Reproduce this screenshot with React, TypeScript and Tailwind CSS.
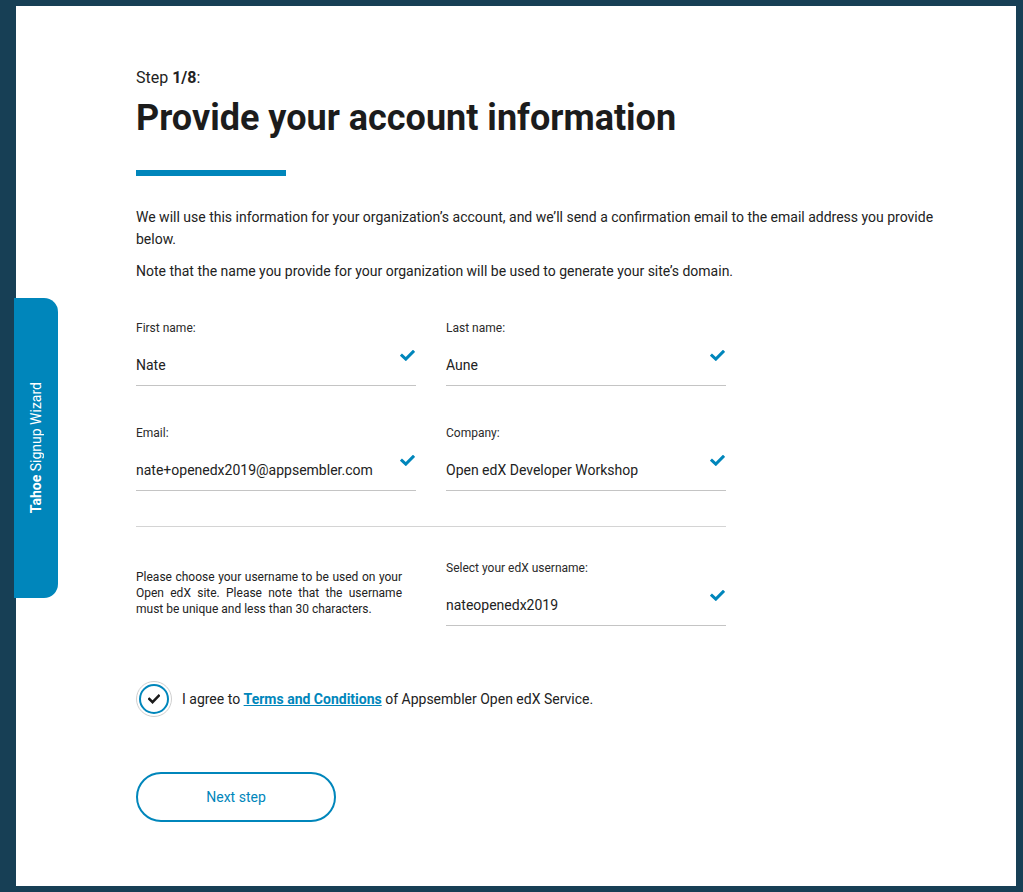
import React from 'react';

const Tick: React.FC<{ className?: string }> = ({ className }) => (
  <svg viewBox="0 0 14 11" className={className} fill="none">
    <path d="M1.5 5.5l3.8 3.6L12.5 1.8" stroke="currentColor" strokeWidth="3" strokeLinecap="square" />
  </svg>
);

const Field: React.FC<{ label: string; value: string }> = ({ label, value }) => (
  <div className="flex flex-col">
    <label className="text-[12px] leading-4 text-[#2a2a2a]">{label}</label>
    <div className="relative mt-[9px] h-[41px] border-b border-[#c4c4c4] flex items-center">
      <span className="text-[14px] text-[#222]">{value}</span>
      <Tick className="absolute right-[1px] top-[5px] w-[15px] h-[11px] text-[#0086bb]" />
    </div>
  </div>
);

export default function App() {
  return (
    <div
      className="relative w-full min-h-[892px] bg-[#173f55] pl-4 pr-[7px] pt-[6px] pb-[6px]"
      style={{ fontFamily: 'Roboto, "Liberation Sans", sans-serif' }}
    >
      <div className="bg-white h-[880px] pl-[120px] pt-[62px]">
        <div className="w-[810px] text-[#222]">
          <p className="text-[16px] leading-5">
            Step <span className="font-bold">1/8</span>:
          </p>
          <h1 className="mt-[8px] text-[36px] leading-[44px] font-bold text-[#1c1c1c]">
            Provide your account information
          </h1>
          <div className="mt-[30px] w-[150px] h-[6px] bg-[#0086bb]" />

          <p className="mt-[30px] text-[14px] leading-[22px]">
            We will use this information for your organization’s account, and we’ll send a confirmation email to the email address you provide below.
          </p>
          <p className="mt-[10px] text-[14px] leading-[22px]">
            Note that the name you provide for your organization will be used to generate your site’s domain.
          </p>

          <div className="mt-[38px] w-[590px]">
            <div className="grid grid-cols-2 gap-x-[30px] gap-y-[39px]">
              <Field label="First name:" value="Nate" />
              <Field label="Last name:" value="Aune" />
              <Field label="Email:" value="nate+openedx2019@appsembler.com" />
              <Field label="Company:" value="Open edX Developer Workshop" />
            </div>

            <div className="mt-[35px] border-t border-[#d4d4d4]" />

            <div className="mt-[33px] grid grid-cols-2 gap-x-[30px] items-center">
              <p className="text-[12px] leading-4 text-justify pr-[14px]">
                Please choose your username to be used on your Open edX site. Please note that the username must be unique and less than 30 characters.
              </p>
              <Field label="Select your edX username:" value="nateopenedx2019" />
            </div>
          </div>

          <div className="mt-[55px] flex items-center gap-[10px]">
            <div className="w-[36px] h-[36px] rounded-full border border-[#cfcfcf] flex items-center justify-center">
              <div className="w-[30px] h-[30px] rounded-full border-2 border-[#0086bb] flex items-center justify-center">
                <Tick className="w-[12px] h-[10px] text-[#1a1a1a]" />
              </div>
            </div>
            <p className="text-[14px]">
              I agree to{' '}
              <a href="#" className="font-bold text-[#0086bb] underline">
                Terms and Conditions
              </a>{' '}
              of Appsembler Open edX Service.
            </p>
          </div>

          <button className="mt-[55px] w-[200px] h-[50px] rounded-full border-2 border-[#0086bb] text-[14px] text-[#0086bb] bg-white">
            Next step
          </button>
        </div>
      </div>

      {/* side tab */}
      <div className="absolute left-[14px] top-[298px] w-[44px] h-[300px] bg-[#0086bb] rounded-r-[14px] flex items-center justify-center">
        <span className="[writing-mode:vertical-rl] rotate-180 text-white text-[14px] whitespace-nowrap">
          <span className="font-bold">Tahoe</span> Signup Wizard
        </span>
      </div>
    </div>
  );
}
